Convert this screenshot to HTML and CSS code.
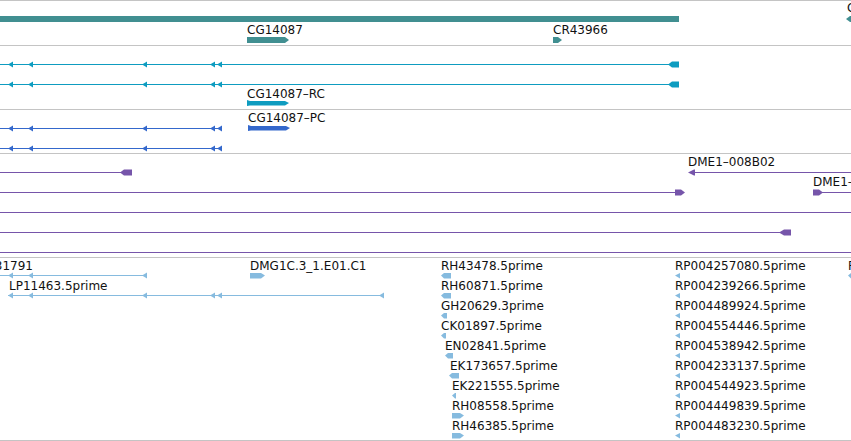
FILE: index.html
```html
<!DOCTYPE html>
<html lang="en">
<head>
    <meta charset="UTF-8">
    <title>Tracks</title>
    <link rel="stylesheet" href="styles.css">
</head>
<body>
    <div class="view">
        <!-- genes -->
        <div class="track t-genes">
            <svg width="851" height="44" class="genes">
                <rect x="0" y="15" width="679" height="6"/>
                <text x="247" y="33">CG14087</text>
                <polygon points="247,36 285,36 289,39 285,42 247,42"/>
                <text x="553" y="33">CR43966</text>
                <polygon points="553,36 558,36 562,39 558,42 553,42"/>
                <text x="847" y="11">CG14088</text>
                <polygon points="846,18 850,15 851,15 851,21 850,21"/>
            </svg>
        </div>

        <!-- transcripts -->
        <div class="track t-rna">
            <svg width="851" height="63" class="rna">
                <rect x="0" y="18" width="672" height="1"/>
                <polygon points="8,18.5 13,15.5 13,21.5"/>
                <polygon points="28,18.5 33,15.5 33,21.5"/>
                <polygon points="142,18.5 147,15.5 147,21.5"/>
                <polygon points="210,18.5 215,15.5 215,21.5"/>
                <polygon points="217,18.5 222,15.5 222,21.5"/>
                <polygon points="668,18.5 672,15.5 679,15.5 679,21.5 672,21.5"/>

                <rect x="0" y="38" width="672" height="1"/>
                <polygon points="8,38.5 13,35.5 13,41.5"/>
                <polygon points="28,38.5 33,35.5 33,41.5"/>
                <polygon points="142,38.5 147,35.5 147,41.5"/>
                <polygon points="210,38.5 215,35.5 215,41.5"/>
                <polygon points="217,38.5 222,35.5 222,41.5"/>
                <polygon points="668,38.5 672,35.5 679,35.5 679,41.5 672,41.5"/>

                <text x="247" y="52">CG14087–RC</text>
                <polygon points="247,54 250,55 285,55 289,57 285,59.5 250,59.5 247,60"/>
            </svg>
        </div>

        <!-- cds -->
        <div class="track t-cds">
            <svg width="851" height="43" class="cds">
                <text x="248" y="12">CG14087–PC</text>
                <polygon points="248,15 251,16 286,16 290,18 286,20.5 251,20.5 248,21"/>

                <rect x="0" y="18" width="222" height="1"/>
                <polygon points="8,18.5 13,15.5 13,21.5"/>
                <polygon points="28,18.5 33,15.5 33,21.5"/>
                <polygon points="142,18.5 147,15.5 147,21.5"/>
                <polygon points="210,18.5 215,15.5 215,21.5"/>
                <polygon points="217,18.5 222,15.5 222,21.5"/>

                <rect x="0" y="38" width="222" height="1"/>
                <polygon points="8,38.5 13,35.5 13,41.5"/>
                <polygon points="28,38.5 33,35.5 33,41.5"/>
                <polygon points="142,38.5 147,35.5 147,41.5"/>
                <polygon points="210,38.5 215,35.5 215,41.5"/>
                <polygon points="217,38.5 222,35.5 222,41.5"/>
            </svg>
        </div>

        <!-- clones -->
        <div class="track t-clones">
            <svg width="851" height="103" class="clones">
                <rect x="0" y="18" width="122" height="1"/>
                <polygon points="120,18.5 124,15.5 132,15.5 132,21.5 124,21.5"/>
                <text x="688" y="12">DME1–008B02</text>
                <rect x="692" y="18" width="159" height="1"/>
                <polygon points="688,18.5 694,15.5 695,15.5 695,21.5 694,21.5"/>

                <rect x="0" y="38" width="677" height="1"/>
                <polygon points="675,35.5 681,35.5 685,38.5 681,41.5 675,41.5"/>
                <text x="813" y="32">DME1–011H07</text>
                <rect x="820" y="38" width="31" height="1"/>
                <polygon points="813,35.5 819,35.5 823,38.5 819,41.5 813,41.5"/>

                <rect x="0" y="58" width="851" height="1"/>

                <rect x="0" y="78" width="782" height="1"/>
                <polygon points="779,78.5 784,75.5 791,75.5 791,81.5 784,81.5"/>

                <rect x="0" y="98" width="851" height="1"/>
            </svg>
        </div>

        <!-- ests -->
        <div class="track t-ests">
            <svg width="851" height="182" class="ests">
                <text x="33" y="12" text-anchor="end">LD31791</text>
                <rect x="0" y="17" width="147" height="1"/>
                <polygon points="8,17.5 13,14.5 13,20.5"/>
                <polygon points="28,17.5 33,14.5 33,20.5"/>
                <polygon points="142,17.5 147,14.5 147,20.5"/>

                <text x="250" y="12">DMG1C.3_1.E01.C1</text>
                <polygon points="250,15 261,15 265,17.5 261,20.5 250,20.5"/>

                <text x="9" y="32">LP11463.5prime</text>
                <rect x="8" y="37" width="376" height="1"/>
                <polygon points="8,37.5 13,34.5 13,40.5"/>
                <polygon points="28,37.5 33,34.5 33,40.5"/>
                <polygon points="142,37.5 147,34.5 147,40.5"/>
                <polygon points="210,37.5 215,34.5 215,40.5"/>
                <polygon points="217,37.5 222,34.5 222,40.5"/>
                <polygon points="379,37.5 384,34.5 384,40.5"/>

                <text x="441" y="12">RH43478.5prime</text>
                <polygon points="441,17.5 444,15 451,15 451,20.5 444,20.5"/>
                <text x="441" y="32">RH60871.5prime</text>
                <polygon points="441,37.5 444,35 451,35 451,40.5 444,40.5"/>
                <text x="441" y="52">GH20629.3prime</text>
                <polygon points="441,57.5 444,55 447,55 447,60.5 444,60.5"/>
                <text x="441" y="72">CK01897.5prime</text>
                <polygon points="441,77.5 444,75 446,75 446,80.5 444,80.5"/>
                <text x="445" y="92">EN02841.5prime</text>
                <polygon points="445,97.5 448,95 453,95 453,100.5 448,100.5"/>
                <text x="450" y="112">EK173657.5prime</text>
                <polygon points="449,117.5 452,115 459,115 459,120.5 452,120.5"/>
                <text x="452" y="132">EK221555.5prime</text>
                <polygon points="452,137.5 455,135 456,135 456,140.5 455,140.5"/>
                <text x="452" y="152">RH08558.5prime</text>
                <polygon points="452,155 460,155 464,157.5 460,160.5 452,160.5"/>
                <text x="452" y="172">RH46385.5prime</text>
                <polygon points="452,175 460,175 464,177.5 460,180.5 452,180.5"/>

                <text x="675" y="12">RP004257080.5prime</text>
                <polygon points="675,17.5 680,15 680,20.5"/>
                <text x="675" y="32">RP004239266.5prime</text>
                <polygon points="675,37.5 680,35 680,40.5"/>
                <text x="675" y="52">RP004489924.5prime</text>
                <polygon points="675,57.5 680,55 680,60.5"/>
                <text x="675" y="72">RP004554446.5prime</text>
                <polygon points="675,77.5 680,75 680,80.5"/>
                <text x="675" y="92">RP004538942.5prime</text>
                <polygon points="675,97.5 680,95 680,100.5"/>
                <text x="675" y="112">RP004233137.5prime</text>
                <polygon points="675,117.5 680,115 680,120.5"/>
                <text x="675" y="132">RP004544923.5prime</text>
                <polygon points="675,137.5 680,135 680,140.5"/>
                <text x="675" y="152">RP004449839.5prime</text>
                <polygon points="675,157.5 680,155 680,160.5"/>
                <text x="675" y="172">RP004483230.5prime</text>
                <polygon points="675,177.5 680,175 680,180.5"/>

                <text x="848" y="12">RP004261</text>
                <polygon points="848,17.5 851,15 851,20.5"/>
            </svg>
        </div>
    </div>
</body>
</html>
```

FILE: styles.css
```css
body {
    margin: 0;
    background: #fff;
    font-family: "DejaVu Sans", sans-serif;
    font-size: 12px;
}
.view {
    border-top: 1px solid #c4c4c4;
    width: 851px;
    overflow: hidden;
}
.track {
    border-bottom: 1px solid #c4c4c4;
}
.track svg {
    display: block;
}
.track text {
    font: 12px "DejaVu Sans", sans-serif;
    fill: #111;
}
.t-genes { height: 44px; }
.t-rna { height: 63px; }
.t-cds { height: 43px; }
.t-clones { height: 103px; }
.t-ests { height: 182px; }

.genes rect, .genes polygon { fill: #418f91; }
.rna rect, .rna polygon { fill: #0e9cc0; }
.cds rect, .cds polygon { fill: #3468cc; }
.clones rect, .clones polygon { fill: #7655aa; }
.ests rect, .ests polygon { fill: #86bbdf; }
```
